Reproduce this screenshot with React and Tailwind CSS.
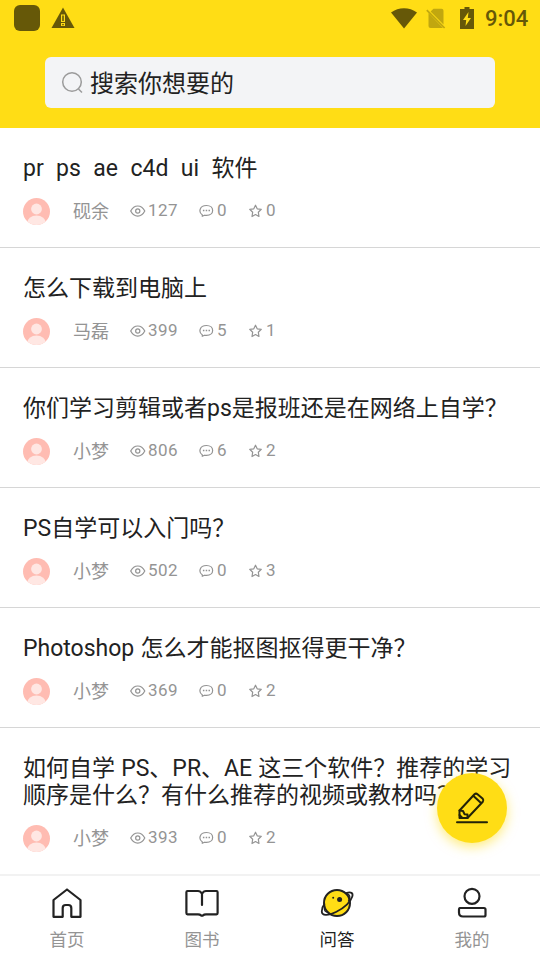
import React from 'react';

const questions = [
  { title: 'pr  ps  ae  c4d  ui  软件', name: '砚余', views: 127, comments: 0, stars: 0 },
  { title: '怎么下载到电脑上', name: '马磊', views: 399, comments: 5, stars: 1 },
  { title: '你们学习剪辑或者ps是报班还是在网络上自学？', name: '小梦', views: 806, comments: 6, stars: 2 },
  { title: 'PS自学可以入门吗？', name: '小梦', views: 502, comments: 0, stars: 3 },
  { title: 'Photoshop 怎么才能抠图抠得更干净？', name: '小梦', views: 369, comments: 0, stars: 2 },
  {
    title: '如何自学 PS、PR、AE 这三个软件？推荐的学习\n顺序是什么？有什么推荐的视频或教材吗？',
    name: '小梦',
    views: 393,
    comments: 0,
    stars: 2,
  },
];

const StatusBar = () => (
  <div className="flex h-9 items-center text-[#665808]">
    <div className="ml-3.5 size-[26px] rounded-[6px] bg-[#665808]" />
    <svg className="ml-[11px]" width="24" height="22" viewBox="0 0 24 22">
      <path d="M12 .5 23.500 21H.5z" fill="currentColor" />
      <path d="M10 7.500h4v7.500h-4zM10 16h4v3h-4z" fill="#ffdd15" />
      <path d="M11.200 8.500h1.600v5.500h-1.600zM11.200 17h1.600v1.200h-1.600z" fill="currentColor" />
    </svg>
    <svg className="ml-auto" width="26" height="21" viewBox="0 0 26 21">
      <path d="M0 4.600C7.500-1.300 18.500-1.300 26 4.600L13 20.500z" fill="currentColor" />
    </svg>
    <svg className="ml-[9px]" width="20" height="21" viewBox="0 0 20 21" opacity="0.4">
      <path d="M7.500.8H15.500a2 2 0 0 1 2 2V16.600L4.600 3.600zM2.500 5 17 20H4.500a2 2 0 0 1-2-2z" fill="currentColor" />
      <path d="M.8 2.200 18.600 20" stroke="currentColor" strokeWidth="1.700" />
    </svg>
    <svg className="ml-[14px]" width="14" height="22" viewBox="0 0 14 22">
      <path d="M4.500 0h5v2H14v20H0V2h4.500z" fill="currentColor" />
      <path d="M8.500 5 3 13h3.200l-.7 6L11 11H7.800z" fill="#ffdd15" />
    </svg>
    <span className="mr-3 ml-[11px] w-[43px] pt-0.5 text-[22px] leading-9 font-medium whitespace-nowrap">9:04</span>
  </div>
);

const Avatar = () => (
  <svg width="27" height="27" viewBox="0 0 27 27">
    <clipPath id="avatar">
      <circle cx="13.500" cy="13.500" r="13.500" />
    </clipPath>
    <g clipPath="url(#avatar)">
      <path d="M0 0h27v27H0z" fill="#ffbcb2" />
      <circle cx="13.500" cy="11" r="5.400" fill="#ffe7e3" />
      <ellipse cx="13.500" cy="25.500" rx="9.500" ry="8" fill="#ffe7e3" />
    </g>
  </svg>
);

const EyeIcon = () => (
  <svg width="16" height="16" viewBox="0 0 16 16" fill="none" stroke="currentColor" strokeWidth="1.200">
    <path d="M.7 8C4.200 1.300 11.300 1.300 14.800 8 11.300 14.700 4.200 14.700.7 8z" />
    <circle cx="7.750" cy="8" r="2.100" />
  </svg>
);

const CommentIcon = () => (
  <svg width="15" height="14" viewBox="0 0 15 14" fill="none" stroke="currentColor" strokeWidth="1.200">
    <path d="M3.400 11C-.8 8.300.4 1.500 7.500 1.500c8.200 0 8.200 9.900 0 9.900-.8 0-1.300-.1-1.900-.2L3.200 12.300z" strokeLinejoin="round" />
    <path d="M3.900 5.700h1.500v1.500H3.900zM6.700 5.700h1.500v1.500H6.700zM9.500 5.700h1.500v1.500H9.500z" fill="currentColor" stroke="none" />
  </svg>
);

const StarIcon = () => (
  <svg width="14" height="14" viewBox="0 0 14 14" fill="none" stroke="currentColor" strokeWidth="1.200" strokeLinejoin="round">
    <path d="m6.500 1.200 1.700 3.600 4.100.5L9.300 8.200l.7 4.300L6.500 10.500l-3.500 2 .7-4.300L.7 5.300l4.100-.5z" />
  </svg>
);

const QuestionItem = ({ item }) => (
  <div className="border-b border-[#d6d6d6] px-[23px] pt-[27px] pb-[22px] last:border-b-0">
    <h3 className="text-[23px] leading-[27px] [word-spacing:0.5px] whitespace-pre text-[#222]">{item.title}</h3>
    <div className="mt-4 flex h-[27px] items-center text-[17px] text-[#949494]">
      <Avatar />
      <span className="ml-[23px] w-[57px] text-[18px]">{item.name}</span>
      <div className="flex w-[69px] items-center gap-0.5 pb-0.5">
        <EyeIcon />
        <span className="tracking-[0.4px]">{item.views}</span>
      </div>
      <div className="flex w-[50px] items-center gap-[3px] pb-0.5">
        <CommentIcon />
        <span>{item.comments}</span>
      </div>
      <div className="flex items-center gap-[3px] pb-0.5">
        <StarIcon />
        <span>{item.stars}</span>
      </div>
    </div>
  </div>
);

const HomeIcon = () => (
  <path d="M2.500 29.800V13L16 2.500 29.500 13v16.800H20.300V21q0-3-3-3h-2.600q-3 0-3 3v8.800z" />
);

const BookIcon = () => (
  <path d="M16 18V6.800Q14.500 4 12 4H1.500Q.4 4 .4 5.200v20.900Q.4 27.300 1.500 27.300H12q2 0 2.800 1 1.200.8 2.400 0 .8-1 2.800-1h10.500q1.100 0 1.100-1.200V5.200Q31.600 4 30.500 4H20q-2.500 0-4 2.800" />
);

const PlanetIcon = () => (
  <>
    <circle cx="16" cy="16" r="13" fill="#ffdd15" strokeWidth="2" />
    <path d="M25.200 6.200C30 4.400 32.400 6 31.300 9.500 29.500 15 23 21 15 25 7 28.900.7 28.800.8 24.500.9 21.500 1.800 19 3.400 17.200" strokeWidth="1.800" />
    <path d="M25.500 6.500Q31 8 27.500 14M3.300 19.500Q2.500 25.500 7.500 25.500" strokeWidth="1.300" />
    <circle cx="18.600" cy="12.400" r="2.500" fill="currentColor" stroke="none" />
    <circle cx="12.200" cy="10.700" r="1" fill="currentColor" stroke="none" />
  </>
);

const UserIcon = () => (
  <>
    <circle cx="16" cy="9.300" r="7.500" />
    <path d="M3.500 21h24.500q1.500 0 1.500 1.500V28q0 1.500-1.500 1.500H7q-4 0-4-4v-3Q3 21 3.500 21z" />
  </>
);

const tabs = [
  { label: '首页', icon: HomeIcon },
  { label: '图书', icon: BookIcon },
  { label: '问答', icon: PlanetIcon, active: true },
  { label: '我的', icon: UserIcon },
];

const TabBar = () => (
  <nav className="grid h-[86px] shrink-0 grid-cols-4 border-t-2 border-[#f2f2f2] bg-white">
    {tabs.map(({ label, icon: Icon, active }) => (
      <div key={label} className="flex flex-col items-center pt-[11px] pr-px text-[#222]">
        <svg
          className="overflow-visible"
          width="32"
          height="32"
          viewBox="0 0 32 32"
          fill="none"
          stroke="currentColor"
          strokeWidth="2.200"
          strokeLinejoin="round"
          strokeLinecap="round"
        >
          <Icon />
        </svg>
        <span className={`mt-2 text-[17.500px] leading-[26px] ${active ? 'text-[#222]' : 'text-[#949494]'}`}>
          {label}
        </span>
      </div>
    ))}
  </nav>
);

const App = () => {
  return (
    <div className="relative flex h-screen w-full flex-col overflow-hidden bg-white font-['Roboto','Noto_Sans_CJK_SC',sans-serif]">
      <header className="h-32 shrink-0 bg-[#ffdd15]">
        <StatusBar />
        <div className="mx-[45px] mt-[21px] flex h-[51px] items-center rounded-[6px] bg-[#f3f4f6] pl-4">
          <svg width="24" height="24" viewBox="0 0 24 24" fill="none" stroke="#9b9b9b" strokeWidth="1.500">
            <circle cx="11" cy="11" r="9.300" />
            <path d="m17.500 18 3.500 3.500" />
          </svg>
          <span className="ml-[5px] pt-0.5 text-[24px] text-[#222]">搜索你想要的</span>
        </div>
      </header>
      <main className="min-h-0 flex-1 overflow-hidden">
        {questions.map((item, i) => (
          <QuestionItem key={i} item={item} />
        ))}
      </main>
      <TabBar />

      {/* Ask button */}
      <button className="absolute right-[33px] bottom-[117px] flex size-[70px] items-center justify-center rounded-full bg-[#ffdd15] shadow-[0_4px_12px_rgba(255,221,21,0.55)]">
        <svg width="34" height="34" viewBox="0 0 34 34" fill="none" stroke="#222208" strokeWidth="2" strokeLinejoin="round" strokeLinecap="round">
          <path d="M4.500 19.500 19.500 3.200q1.500-1.200 3 0l5.300 4.600q1.200 1.500 0 3L12.500 27H4.500z" />
          <path d="m4.500 19.500 3.500.5 1.500 3.200 3 .3V27M18.500 5l7.500 7M4.500 24l3 3" />
          <path d="M2 31.200h30" />
        </svg>
      </button>
    </div>
  );
};

export default App;
